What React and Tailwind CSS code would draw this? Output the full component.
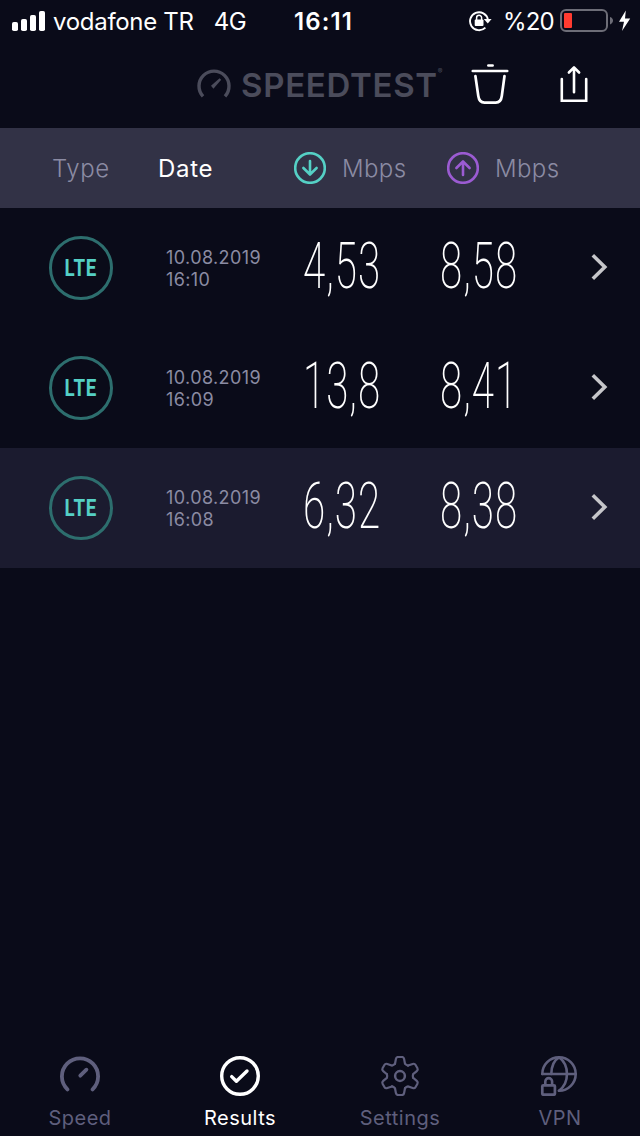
const results = [
  { date: '10.08.2019', time: '16:10', download: '4,53', upload: '8,58' },
  { date: '10.08.2019', time: '16:09', download: '13,8', upload: '8,41' },
  { date: '10.08.2019', time: '16:08', download: '6,32', upload: '8,38', active: true },
];

const SignalIcon = () => (
  <svg width="34" height="20" viewBox="0 0 34 20" fill="currentColor">
    <rect x="0" y="11" width="6" height="9" rx="1.8" />
    <rect x="9" y="8" width="6" height="12" rx="1.8" />
    <rect x="18" y="4" width="6" height="16" rx="1.8" />
    <rect x="27" y="0" width="6" height="20" rx="1.8" />
  </svg>
);

const RotationLockIcon = () => (
  <svg width="24" height="22" viewBox="0 0 24 22" fill="none" stroke="currentColor" strokeWidth="1.9">
    <path d="M16.4 17.6A9 9 0 1 1 18.9 9.6" />
    <path d="M14.8 9H22.6L18.8 13.4Z" fill="currentColor" stroke="none" />
    <rect x="5.7" y="9.4" width="8.8" height="6.6" rx="1" fill="currentColor" stroke="none" />
    <path d="M7.6 10V7.8a2.5 2.5 0 0 1 5 0v2.2" strokeWidth="1.5" />
  </svg>
);

const BatteryIcon = () => (
  <svg width="72" height="24" viewBox="0 0 72 24" fill="none">
    <rect x="1" y="1" width="46" height="21" rx="5" stroke="#6d6d77" strokeWidth="2" />
    <path d="M50 8C54 9 54 14 50 15.5Z" fill="#6d6d77" />
    <rect x="4" y="4" width="8" height="15" rx="1" fill="#ff3b30" />
    <path d="M65.8 1.5L59 12.8H64L62 22L70.2 9.6H65Z" fill="white" />
  </svg>
);

const LogoGauge = () => (
  <svg width="34" height="30" viewBox="0 0 34 30" fill="none">
    <path d="M6 27.3A15 15 0 1 1 28 27.3" stroke="currentColor" strokeWidth="3.4" />
    <path d="M14 16.8L22.6 9.2L24.2 10.7L16.4 19.8Z" fill="currentColor" />
  </svg>
);

const TrashIcon = () => (
  <svg width="40" height="42" viewBox="0 0 40 42" fill="none" stroke="currentColor" strokeWidth="2.7" strokeLinecap="round">
    <path d="M18.4 2.5H22.6" />
    <path d="M2.8 8H37.2" />
    <path d="M5.4 13L8.3 33Q9.2 39.6 14.5 39.6H25.8Q31 39.6 31.8 33L34.5 13" />
  </svg>
);

const ShareIcon = () => (
  <svg width="30" height="40" viewBox="0 0 30 40" fill="none" stroke="currentColor" strokeWidth="2.6" strokeLinecap="round">
    <path d="M2.8 15V36.8H27.2V15" />
    <path d="M15 28.3V3.8M9.9 8.5L15 3.4L20.1 8.5" strokeLinejoin="round" />
  </svg>
);

const ArrowCircle = ({ className }) => (
  <svg width="32" height="32" viewBox="0 0 32 32" fill="none" stroke="currentColor" strokeWidth="2.6" className={className}>
    <circle cx="16" cy="16" r="14.8" />
    <path d="M16 9V22M9.4 16L16 22.5L22.6 16" strokeLinecap="round" strokeLinejoin="round" />
  </svg>
);

const ChevronIcon = () => (
  <svg width="18" height="26" viewBox="0 0 18 26" fill="none" stroke="#c6c6ca" strokeWidth="3.6">
    <path d="M1.8 1.3L13.8 13L1.8 24.7" />
  </svg>
);

const SpeedIcon = () => (
  <svg width="40" height="40" viewBox="0 0 40 40" fill="none" stroke="currentColor" strokeWidth="3.8" strokeLinecap="round">
    <path d="M7.4 33.4A18.1 18.1 0 1 1 32.6 33.4" />
    <path d="M20.3 19.7L26.4 13.7" />
  </svg>
);

const ResultsIcon = () => (
  <svg width="40" height="40" viewBox="0 0 40 40" fill="none" stroke="currentColor" strokeWidth="3.4">
    <circle cx="20" cy="20" r="18.3" />
    <path d="M11.7 20.6L16.4 25.2L27 15" strokeLinecap="round" strokeLinejoin="round" />
  </svg>
);

const SettingsIcon = () => (
  <svg width="40" height="40" viewBox="-20 -20 40 40" fill="none" stroke="currentColor" strokeWidth="2.2" strokeLinecap="round">
    {[0, 60, 120, 180, 240, 300].map((angle) => (
      <path
        key={angle}
        transform={`rotate(${angle})`}
        d="M-5 -12.2L-4.1 -17Q-3.7 -19 -2 -19H2Q3.7 -19 4.1 -17L5 -12.2Q6.3 -10.8 8.07 -10.43"
      />
    ))}
    <circle r="4.9" strokeWidth="2.5" />
  </svg>
);

const VpnIcon = () => (
  <svg width="40" height="40" viewBox="0 0 40 40" fill="none" stroke="currentColor" strokeWidth="2.6" strokeLinecap="round">
    <path d="M2.3 18A16.7 16.7 0 1 1 19 34.7" />
    <path d="M2.3 18H35.7" />
    <path d="M19 1.3C13.5 4.5 11.4 11 11.3 18" />
    <path d="M19 1.3C29.6 9 29.6 27 19 34.7" />
    <rect x="2.3" y="29.3" width="12.6" height="9.4" rx="1" strokeWidth="2.7" />
    <path d="M5.3 28.5V25.5a3.4 3.4 0 0 1 6.8 0V28.5" />
  </svg>
);

const tabs = [
  { label: 'Speed', icon: SpeedIcon },
  { label: 'Results', icon: ResultsIcon, active: true },
  { label: 'Settings', icon: SettingsIcon },
  { label: 'VPN', icon: VpnIcon },
];

const StatusBar = () => (
  <div className="grid grid-cols-[294px_175px_1fr] items-center h-10 text-2xl leading-10">
    <div className="flex items-center pl-3">
      <SignalIcon />
      <span className="ml-[7px] pt-0.5 tracking-[-0.3px]">vodafone TR</span>
      <span className="ml-5 pt-0.5 tracking-[-0.5px]">4G</span>
    </div>
    <span className="pt-0.5 font-semibold tracking-[1.1px]">16:11</span>
    <div className="flex items-center">
      <RotationLockIcon />
      <span className="ml-2.5 w-[57px] pt-0.5 tracking-[-0.9px]">%20</span>
      <BatteryIcon />
    </div>
  </div>
);

const Header = () => (
  <header className="flex items-center h-[88px] pl-[197px]">
    <div className="flex items-center w-[273px] text-[#4b4c5b]">
      <LogoGauge />
      <span className="ml-2.5 pt-0.5 text-[33px] leading-10 font-semibold tracking-[0.7px]">SPEEDTEST</span>
      <span className="self-start mt-1 text-[7px]">®</span>
    </div>
    <button type="button">
      <TrashIcon />
    </button>
    <button type="button" className="ml-[49px]">
      <ShareIcon />
    </button>
  </header>
);

const Speed = ({ value }) => (
  <span className="w-[137px] pb-1">
    <span className="inline-block origin-left scale-x-[0.62] font-[Roboto] font-extralight text-[65px] leading-[76px] tracking-[1.6px]">
      {value}
    </span>
  </span>
);

const ResultRow = ({ result }) => (
  <div className={`flex items-center h-[120px] pl-[49px] ${result.active ? 'bg-[#1b1b2f]' : ''}`}>
    <div className="flex items-center justify-center size-16 rounded-full border-3 border-[#2d6e6e] text-[#55d0c5]">
      <span className="inline-block scale-x-[0.78] font-[Roboto] text-2xl font-bold tracking-[1px]">LTE</span>
    </div>
    <div className="ml-[53px] w-[137px] pt-0.5 text-lg leading-[22px] tracking-[0.4px] text-[#8b8ba3]">
      <p>{result.date}</p>
      <p>{result.time}</p>
    </div>
    <Speed value={result.download} />
    <Speed value={result.upload} />
    <span className="ml-3.5 pb-0.5">
      <ChevronIcon />
    </span>
  </div>
);

const App = () => {
  return (
    <div className="flex flex-col w-[640px] h-[1136px] overflow-hidden bg-[#0a0b19] text-white font-[Inter,sans-serif]">
      <StatusBar />
      <Header />
      <div className="flex items-center h-20 pl-[52px] bg-[#323246] text-2xl font-light text-[#8b8ba3]">
        <span className="w-[106px] pt-0.5 tracking-[0.6px]">Type</span>
        <span className="w-[136px] pt-0.5 font-normal tracking-[0.7px] text-white">Date</span>
        <ArrowCircle className="text-[#55d0c5]" />
        <span className="ml-4 w-[105px] pt-0.5 tracking-[0.4px]">Mbps</span>
        <ArrowCircle className="text-[#9b5bd2] rotate-180" />
        <span className="ml-4 pt-0.5 tracking-[0.4px]">Mbps</span>
      </div>
      <main className="flex-1">
        {results.map((result) => (
          <ResultRow key={result.time} result={result} />
        ))}
      </main>
      <nav className="grid grid-cols-4 h-20">
        {tabs.map(({ label, icon: Icon, active }) => (
          <button
            key={label}
            type="button"
            className={`flex flex-col items-center gap-2 text-xl tracking-[0.5px] ${active ? 'text-white' : 'text-[#5f5f7d]'}`}
          >
            <Icon />
            <span>{label}</span>
          </button>
        ))}
      </nav>
    </div>
  );
};

export default App;
